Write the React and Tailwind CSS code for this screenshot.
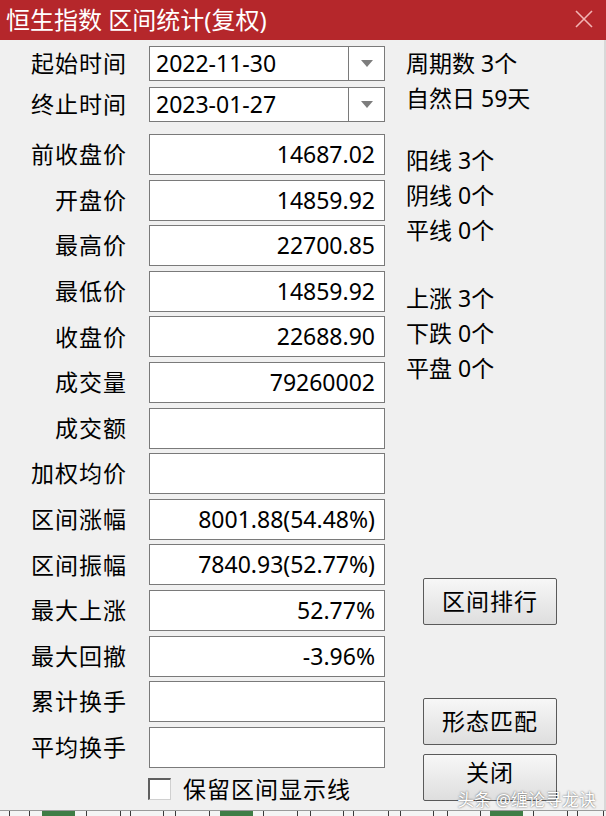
import React from 'react';

const rows = [
  { label: '前收盘价', value: '14687.02' },
  { label: '开盘价', value: '14859.92' },
  { label: '最高价', value: '22700.85' },
  { label: '最低价', value: '14859.92' },
  { label: '收盘价', value: '22688.90' },
  { label: '成交量', value: '79260002' },
  { label: '成交额', value: '' },
  { label: '加权均价', value: '' },
  { label: '区间涨幅', value: '8001.88(54.48%)' },
  { label: '区间振幅', value: '7840.93(52.77%)' },
  { label: '最大上涨', value: '52.77%' },
  { label: '最大回撤', value: '-3.96%' },
  { label: '累计换手', value: '' },
  { label: '平均换手', value: '' },
];

// bottom strip: b = blank cell, l = divider, g = green cell
const strip = [
  ['b', 9], ['l', 1], ['b', 19], ['l', 1], ['b', 12], ['g', 33], ['b', 11], ['l', 1],
  ['b', 33], ['l', 1], ['b', 9], ['l', 1], ['b', 32], ['l', 1], ['b', 11], ['l', 1],
  ['b', 33], ['l', 1], ['b', 10], ['g', 33], ['b', 10], ['l', 1], ['b', 33], ['l', 1],
  ['b', 12], ['l', 1], ['b', 32], ['l', 1], ['b', 9], ['l', 1], ['b', 34], ['l', 1],
  ['b', 11], ['l', 1], ['b', 32], ['l', 1], ['b', 13], ['l', 1], ['b', 32], ['l', 1],
  ['b', 9], ['g', 33], ['b', 10], ['l', 1], ['b', 33], ['l', 1], ['b', 9], ['l', 1],
  ['b', 25], ['l', 1], ['b', 2],
];

const stripClass = {
  b: 'bg-[#f4f4f4]',
  l: 'bg-[#3a3a3a]',
  g: 'bg-[#3f7d46]',
};

const ComboBox = ({ value }) => (
  <div className="ml-[22px] flex h-[35px] w-[236px] border border-[#7a7a7a] bg-white">
    <div className="flex flex-1 items-center pl-[6px] text-[23px] leading-none text-black">{value}</div>
    <div className="flex w-[36px] items-center justify-center border-l border-[#7a7a7a]">
      <svg width="12" height="7" viewBox="0 0 12 7">
        <path d="M0 0 L12 0 L6 7 Z" fill="#7d7d7d" />
      </svg>
    </div>
  </div>
);

const Button = ({ children, className }) => (
  <div
    className={`ml-[17px] flex h-[47px] w-[134px] items-center justify-center rounded-[2px] border border-[#5a5a5a] bg-gradient-to-b from-[#f7f7f7] to-[#dedede] text-[23px] leading-none tracking-[1px] text-black ${className}`}
  >
    {children}
  </div>
);

export default function App() {
  return (
    <div className="relative flex h-[816px] w-[606px] flex-col overflow-hidden bg-[#f0f0f0] font-['Noto_Sans','Noto_Sans_CJK_SC',sans-serif] text-black">
      {/* title bar */}
      <div className="flex h-[40px] shrink-0 items-center justify-between bg-[#b5272b] pl-[6px] pr-[12px]">
        <span className="text-[24px] leading-none text-white">恒生指数 区间统计(复权)</span>
        <svg width="20" height="20" viewBox="0 0 20 20" className="mb-[2px]">
          <path d="M2 2 L18 18 M18 2 L2 18" stroke="#f2b4b4" strokeWidth="1.6" />
        </svg>
      </div>

      <div className="flex flex-1 border-r-2 border-[#d8d8d8] pt-[6px]">
        {/* left column */}
        <div className="flex w-[385px] shrink-0 flex-col">
          <div className="flex items-center">
            <div className="w-[127px] text-right text-[23px] tracking-[1px]">起始时间</div>
            <ComboBox value="2022-11-30" />
          </div>
          <div className="mt-[6px] flex items-center">
            <div className="w-[127px] text-right text-[23px] tracking-[1px]">终止时间</div>
            <ComboBox value="2023-01-27" />
          </div>

          <div className="mt-[12px] flex flex-col gap-[4.6px]">
            {rows.map((row) => (
              <div key={row.label} className="flex items-center">
                <div className="w-[127px] text-right text-[23px] tracking-[1px]">{row.label}</div>
                <div className="ml-[22px] flex h-[41px] w-[236px] items-center justify-end border border-[#7a7a7a] bg-white pr-[9px] text-[23px] leading-none">
                  {row.value}
                </div>
              </div>
            ))}
          </div>

          <div className="mt-[10px] flex items-center">
            <div className="ml-[148px] h-[22px] w-[23px] border-l-2 border-t-2 border-r border-b border-l-[#5f5f5f] border-t-[#5f5f5f] border-r-[#d0d0d0] border-b-[#d0d0d0] bg-white" />
            <span className="ml-[12px] text-[23px] leading-none tracking-[1px]">保留区间显示线</span>
          </div>
        </div>

        {/* right column */}
        <div className="ml-[21px] flex flex-col text-[23px] leading-[35px]">
          <div>周期数 3个</div>
          <div>自然日 59天</div>
          <div className="mt-[27px]">阳线 3个</div>
          <div>阴线 0个</div>
          <div>平线 0个</div>
          <div className="mt-[33px]">上涨 3个</div>
          <div>下跌 0个</div>
          <div>平盘 0个</div>

          <Button className="mt-[192px]">区间排行</Button>
          <Button className="mt-[73px]">形态匹配</Button>
          <Button className="mt-[9px] pb-[10px]">关闭</Button>
        </div>
      </div>

      {/* bottom strip */}
      <div className="flex h-[6px] shrink-0 border-t border-[#9a9a9a]">
        {strip.map(([t, w], i) => (
          <div key={i} className={`h-full shrink-0 ${stripClass[t]}`} style={{ width: w }} />
        ))}
      </div>

      {/* watermark */}
      <div className="absolute bottom-[8px] right-[10px] text-[17px] leading-none text-white [text-shadow:0_0_2px_rgba(0,0,0,0.7)]">
        头条 @缠论寻龙诀
      </div>
    </div>
  );
}
